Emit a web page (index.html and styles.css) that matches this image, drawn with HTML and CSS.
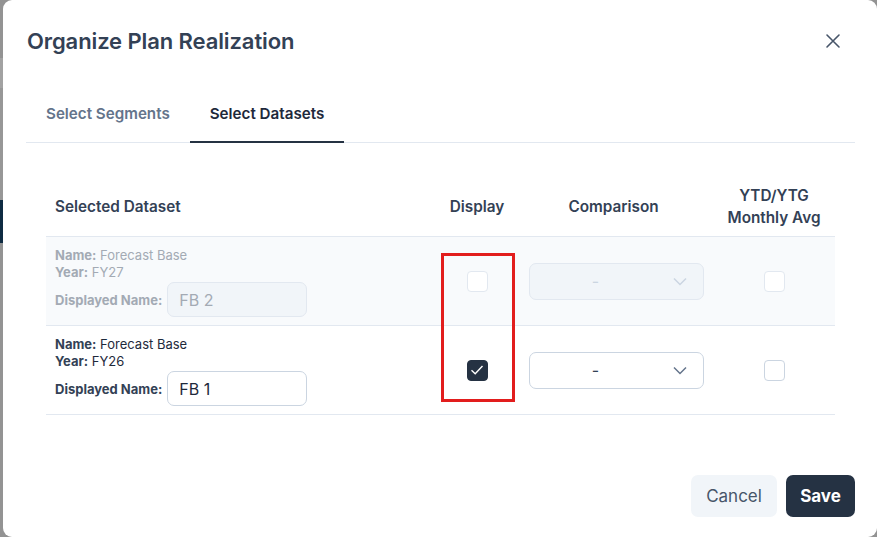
FILE: index.html
```html
<!DOCTYPE html>
<html lang="en">
<head>
<meta charset="utf-8">
<title>Organize Plan Realization</title>
<link rel="stylesheet" href="styles.css">
</head>
<body>
<div class="modal">
  <div class="modal-header">
    <h1 class="title">Organize Plan Realization</h1>
    <button class="close" aria-label="Close">
      <svg width="16" height="16" viewBox="0 0 16 16"><path d="M2 2L14 14M14 2L2 14" stroke="#475569" stroke-width="1.6" stroke-linecap="round" fill="none"/></svg>
    </button>
  </div>
  <div class="tabs">
    <div class="tab">Select Segments</div>
    <div class="tab active">Select Datasets</div>
  </div>
  <div class="table">
    <div class="row head">
      <div class="cell left">Selected Dataset</div>
      <div class="cell center">Display</div>
      <div class="cell center">Comparison</div>
      <div class="cell center">YTD/YTG<br>Monthly Avg</div>
    </div>
    <div class="row data disabled">
      <div class="cell info">
        <div class="line"><b>Name:</b> Forecast Base</div>
        <div class="line"><b>Year:</b> FY27</div>
        <div class="dn"><b>Displayed Name:</b><input class="inp" value="FB 2" disabled></div>
      </div>
      <div class="cell center"><span class="cb"></span></div>
      <div class="cell"><div class="select"><span class="val">-</span><svg width="14" height="9" viewBox="0 0 14 9"><path d="M1 1.5L7 7.5L13 1.5" stroke="#cbd5e1" stroke-width="1.5" fill="none"/></svg></div></div>
      <div class="cell center"><span class="cb"></span></div>
    </div>
    <div class="row data">
      <div class="cell info">
        <div class="line"><b>Name:</b> Forecast Base</div>
        <div class="line"><b>Year:</b> FY26</div>
        <div class="dn"><b>Displayed Name:</b><input class="inp" value="FB 1"></div>
      </div>
      <div class="cell center"><span class="cb checked"><svg width="14" height="12" viewBox="0 0 14 12"><path d="M1.5 6.2L5.2 9.8L12.5 2" stroke="#ffffff" stroke-width="1.4" fill="none"/></svg></span></div>
      <div class="cell"><div class="select"><span class="val">-</span><svg width="14" height="9" viewBox="0 0 14 9"><path d="M1 1.5L7 7.5L13 1.5" stroke="#64748b" stroke-width="1.5" fill="none"/></svg></div></div>
      <div class="cell center"><span class="cb"></span></div>
    </div>
    <div class="highlight"></div>
  </div>
  <div class="footer">
    <button class="btn cancel">Cancel</button>
    <button class="btn save">Save</button>
  </div>
</div>
</body>
</html>
```
FILE: styles.css
```css
* { box-sizing: border-box; }
html, body { margin: 0; height: 100%; }
body {
  width: 877px;
  height: 537px;
  overflow: hidden;
  font-family: Inter, "Noto Sans", sans-serif;
  background: linear-gradient(to bottom, #939393 0, #939393 58px, #a2a2a2 58px, #a2a2a2 88px, #979797 88px, #979797 200px, #0f2b42 200px, #0f2b42 243px, #939393 243px);
  display: flex;
}
.modal {
  margin-left: 3px;
  width: 874px;
  height: 537px;
  background: #ffffff;
  border-radius: 9px;
  padding: 0 22px 20px 23px;
  display: flex;
  flex-direction: column;
}
.modal-header {
  display: flex;
  align-items: center;
  justify-content: space-between;
  height: 82px;
  padding-left: 1px;
}
.title {
  margin: 0;
  font-size: 22px;
  font-weight: 600;
  color: #334155;
  letter-spacing: -0.1px;
}
.close {
  border: 0;
  background: none;
  padding: 0;
  margin-right: 14px;
  width: 16px;
  height: 16px;
  display: flex;
}
.tabs {
  display: flex;
  height: 61px;
  border-bottom: 1px solid #e2e8f0;
}
.tab {
  padding: 21px 20px 0;
  font-size: 15.2px;
  font-weight: 600;
  color: #64748b;
  line-height: 21px;
}
.tab.active {
  color: #1e293b;
  border-bottom: 2px solid #253243;
  margin-bottom: -1px;
}
.table {
  position: relative;
  margin: 33px 20px 0;
}
.row {
  display: grid;
  grid-template-columns: 394px 74px 199px 122px;
  border-bottom: 1px solid #e2e8f0;
}
.row.head {
  font-size: 15.3px;
  font-weight: 600;
  color: #334155;
  line-height: 22px;
  padding: 9px 0 7px;
}
.row.head .cell { display: flex; align-items: center; }
.row.head .cell.center { justify-content: center; text-align: center; }
.row.head .cell.left { padding-left: 9px; }
.row.data { height: 89px; }
.row.data .cell { display: flex; align-items: center; }
.row.data .cell.center { justify-content: center; }
.row.disabled { background: #f8fafc; }
.cell.info {
  flex-direction: column;
  align-items: flex-start !important;
  padding: 10px 0 0 9px;
  font-size: 13px;
  color: #1e293b;
}
.cell.info b { font-weight: 700; color: #334155; }
.line { line-height: 16.5px; }
.dn {
  display: flex;
  align-items: center;
  gap: 5px;
  margin-top: 2px;
}
.inp {
  width: 140px;
  height: 35px;
  border: 1px solid #cbd5e1;
  border-radius: 7px;
  padding: 0 11px;
  font-family: Inter, "Noto Sans", sans-serif;
  font-size: 16px;
  color: #1e293b;
  background: #ffffff;
}
.disabled .cell.info, .disabled .cell.info b { color: #a3aab4; }
.disabled .inp {
  background: #f1f5f9;
  border-color: #e2e8f0;
  color: #a3aab4;
}
.cb {
  width: 21px;
  height: 21px;
  border: 1px solid #cbd5e1;
  border-radius: 4px;
  background: #ffffff;
  display: flex;
  align-items: center;
  justify-content: center;
}
.disabled .cb { border-color: #e2e8f0; }
.cb.checked { background: #253243; border-color: #253243; }
.select {
  margin-left: 15px;
  width: 175px;
  height: 37px;
  border: 1px solid #cbd5e1;
  border-radius: 7px;
  background: #ffffff;
  display: flex;
  align-items: center;
  padding: 0 16px 0 0;
  color: #334155;
  font-size: 16px;
}
.select .val { flex: 1; text-align: center; padding-right: 12px; }
.disabled .select { background: #f1f5f9; border-color: #e2e8f0; color: #cbd5e1; }
.highlight {
  position: absolute;
  left: 395px;
  top: 77px;
  width: 74px;
  height: 149px;
  border: 3px solid #e21d1d;
}
.footer {
  margin-top: auto;
  display: flex;
  justify-content: flex-end;
  gap: 9px;
}
.btn {
  height: 42px;
  border: 0;
  border-radius: 7px;
  font-family: Inter, "Noto Sans", sans-serif;
  font-size: 17px;
  padding: 0 14px;
}
.cancel { background: #f1f5f9; color: #475569; width: 86px; }
.save { background: #253243; color: #ffffff; font-weight: 700; width: 69px; }
```
